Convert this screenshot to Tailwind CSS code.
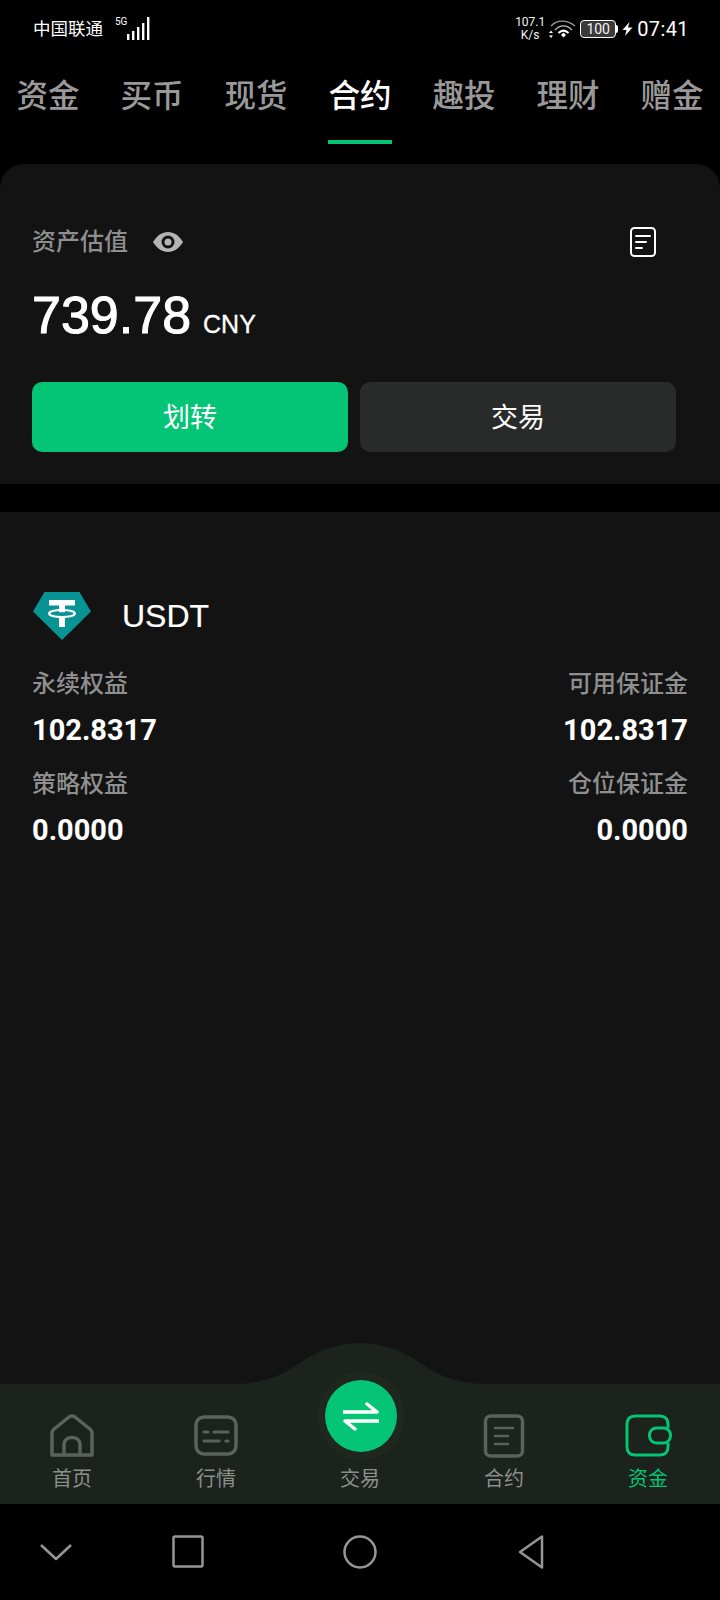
<!DOCTYPE html>
<html lang="zh-CN">

<head>
    <meta charset="UTF-8">
    <meta name="viewport" content="width=device-width, initial-scale=1.0">
    <title>资金 - 合约</title>
    <script src="https://cdn.jsdelivr.net/npm/@tailwindcss/browser@4"></script>
</head>

<body class="bg-black">
    <div class="w-[720px] h-[1600px] flex flex-col overflow-hidden bg-black text-white font-['Roboto','Noto_Sans_CJK_SC',sans-serif]">

        <!-- Status bar -->
        <div class="h-[58px] shrink-0 flex items-center pl-[33px] pr-[31px]">
            <span class="text-[17.5px] leading-none mt-[2px]">中国联通</span>
            <span class="text-[10px] leading-none ml-[12px] -mt-[15px]">5G</span>
            <svg width="24" height="24" viewBox="0 0 24 24" fill="#fff">
                <rect x="0" y="17" width="2.4" height="6"/>
                <rect x="5" y="14" width="2.4" height="9"/>
                <rect x="10" y="10" width="2.4" height="13"/>
                <rect x="15" y="6" width="2.4" height="17"/>
                <rect x="20" y="0" width="2.4" height="23"/>
            </svg>
            <div class="ml-auto flex items-center">
                <div class="flex flex-col items-center text-[12px] leading-[13px] text-gray-100 w-[30px]">
                    <span>107.1</span>
                    <span>K/s</span>
                </div>
                <svg class="ml-[3px]" width="28" height="24" viewBox="0 0 28 24" fill="none" stroke="#fff">
                    <path d="M3 9C9 2.500 19 2.500 27 9" stroke-width="1.200" opacity="0.6"/>
                    <path d="M7 13C12 7.500 19 7.500 24 13" stroke-width="1.200" opacity="0.75"/>
                    <path d="M10.500 16C14 12.800 17 12.800 20.500 16" stroke-width="2.200"/>
                    <path d="M13 18L15.500 15.500L18 18L15.500 20.500Z" fill="#fff" stroke="none"/>
                    <path d="M1 16L3 13.500L5 16ZM1 18.500L3 21L5 18.500Z" fill="#fff" stroke="none"/>
                </svg>
                <div class="ml-[4px] w-[36px] h-[18px] rounded-[4px] border border-white bg-[#3a3a3a] flex items-center justify-center text-[14px] leading-none text-gray-100">100</div>
                <div class="w-[2px] h-[8px] bg-white rounded-r-sm"></div>
                <svg class="ml-[4px]" width="11" height="14" viewBox="0 0 11 14" fill="#fff">
                    <path d="M7.500 0L0.500 8H4.500L3 14L10.500 5.500H6Z"/>
                </svg>
                <span class="ml-[4px] text-[20px] leading-none tracking-[0.4px]">07:41</span>
            </div>
        </div>

        <!-- Account tabs -->
        <div class="h-[106px] shrink-0 flex -ml-[4px] text-[31.5px] leading-none font-medium text-[#999999]">
            <div class="w-[104px] shrink-0 flex flex-col items-center pt-[23px]">资金</div>
            <div class="w-[104px] shrink-0 flex flex-col items-center pt-[23px]">买币</div>
            <div class="w-[104px] shrink-0 flex flex-col items-center pt-[23px]">现货</div>
            <div class="w-[104px] shrink-0 flex flex-col items-center pt-[23px] text-white">
                合约
                <div class="w-[64px] h-[4px] mt-[27.500px] bg-[#04c475]"></div>
            </div>
            <div class="w-[104px] shrink-0 flex flex-col items-center pt-[23px]">趣投</div>
            <div class="w-[104px] shrink-0 flex flex-col items-center pt-[23px]">理财</div>
            <div class="w-[104px] shrink-0 flex flex-col items-center pt-[23px]">赠金</div>
        </div>

        <!-- Asset summary -->
        <section class="h-[320px] shrink-0 bg-[#131313] rounded-t-[24px] pl-[32px] pr-[44px]">
            <div class="flex items-center h-[36px] mt-[60px]">
                <span class="text-[24px] leading-none font-medium text-[#8f8f8f]">资产估值</span>
                <svg class="ml-[25px]" width="30" height="20" viewBox="0 0 30 20">
                    <path d="M0 10C4 3.500 9 0 15 0C21 0 26 3.500 30 10C26 16.500 21 20 15 20C9 20 4 16.500 0 10Z" fill="#b5b5b5"/>
                    <circle cx="15" cy="10" r="6.500" fill="#131313"/>
                    <circle cx="15" cy="10" r="3.500" fill="#b5b5b5"/>
                </svg>
                <svg class="ml-auto mr-[20px]" width="26" height="32" viewBox="0 0 26 32" fill="none" stroke="#fff" stroke-linecap="round">
                    <rect x="1" y="2" width="24" height="28" rx="3.500" stroke-width="2"/>
                    <path d="M6 10H20M6 16H16M6 22H12" stroke-width="2"/>
                </svg>
            </div>
            <div class="flex items-baseline mt-[25px] font-['Liberation_Sans',sans-serif]">
                <span class="text-[52px] leading-[60px] [-webkit-text-stroke:1px_#fff]">739.78</span>
                <span class="text-[25px] ml-[12px] [-webkit-text-stroke:0.3px_#fff]">CNY</span>
            </div>
            <div class="flex gap-[12px] mt-[37px]">
                <button class="flex-1 h-[70px] pt-[3px] rounded-[10px] bg-[#04c475] text-[27px] leading-none">划转</button>
                <button class="flex-1 h-[70px] pt-[3px] rounded-[10px] bg-[#292b2b] text-[27px] leading-none">交易</button>
            </div>
        </section>

        <div class="h-[28px] shrink-0"></div>

        <!-- Contract balance -->
        <section class="flex-1 bg-[#131313] px-[32px] pt-[79px]">
            <div class="flex items-center h-[50px]">
                <svg width="60" height="50" viewBox="0 0 60 50">
                    <path d="M12.500 1H47.500L59 20.500L30 49L1 20.500Z" fill="#089494"/>
                    <path d="M17 9H43V14.500H33V18C38 18.300 44 19.500 44 22.500C44 25.500 38 26.700 33 27V36H27V27C22 26.700 16 25.500 16 22.500C16 19.500 22 18.300 27 18V14.500H17Z" fill="#fff"/>
                    <ellipse cx="30" cy="22.500" rx="11.500" ry="2.600" fill="#089494"/>
                    <rect x="27" y="18" width="6" height="3.200" fill="#fff"/>
                </svg>
                <span class="ml-[30px] text-[32px] leading-none font-['Liberation_Sans',sans-serif] [-webkit-text-stroke:0.2px_#fff]">USDT</span>
            </div>
            <div class="grid grid-cols-2 mt-[25px]">
                <div>
                    <div class="text-[24px] leading-[36px] font-medium text-[#8f8f8f]">永续权益</div>
                    <div class="text-[29px] leading-[36px] mt-[10px] font-bold">102.8317</div>
                </div>
                <div class="text-right">
                    <div class="text-[24px] leading-[36px] font-medium text-[#8f8f8f]">可用保证金</div>
                    <div class="text-[29px] leading-[36px] mt-[10px] font-bold">102.8317</div>
                </div>
                <div class="mt-[18px]">
                    <div class="text-[24px] leading-[36px] font-medium text-[#8f8f8f]">策略权益</div>
                    <div class="text-[29px] leading-[36px] mt-[10px] font-bold">0.0000</div>
                </div>
                <div class="mt-[18px] text-right">
                    <div class="text-[24px] leading-[36px] font-medium text-[#8f8f8f]">仓位保证金</div>
                    <div class="text-[29px] leading-[36px] mt-[10px] font-bold">0.0000</div>
                </div>
            </div>
        </section>

        <!-- Bottom tab bar -->
        <nav class="relative h-[120px] shrink-0 bg-[#1c221c] grid grid-cols-5 text-[20px] leading-none text-[#8d8f8c]">
            <svg class="absolute left-[215px] -top-[41px]" width="290" height="42" viewBox="0 0 290 42" fill="#1c221c">
                <path d="M0 42C45 42 65 34 85 20C105 6 125 0 145 0C165 0 185 6 205 20C225 34 245 42 290 42Z"/>
            </svg>

            <a class="flex flex-col items-center pt-[30px]">
                <svg width="44" height="44" viewBox="0 0 44 44" fill="none" stroke="#5a635b" stroke-width="3.500" stroke-linejoin="round">
                    <path d="M2 41V19Q2 17 3.500 15.500L19 3Q22 1 25 3L40.500 15.500Q42 17 42 19V41Z"/>
                    <path d="M14 41V31C14 21 30 21 30 31V41"/>
                </svg>
                <span class="mt-[11px]">首页</span>
            </a>
            <a class="flex flex-col items-center pt-[30px]">
                <svg width="44" height="44" viewBox="0 0 44 44" fill="none" stroke="#5a635b" stroke-linecap="round">
                    <rect x="2" y="3" width="40" height="37" rx="8" stroke-width="3.500"/>
                    <path d="M10 18H14M20 18H34M10 27H25M32 27H34" stroke-width="3.200"/>
                </svg>
                <span class="mt-[11px]">行情</span>
            </a>
            <a class="relative flex flex-col items-center pt-[85px]">
                <div class="absolute left-[29px] top-[-12px] w-[88px] h-[88px] rounded-full bg-[#20271f] flex items-center justify-center">
                    <div class="w-[72px] h-[72px] rounded-full bg-[#04c475] flex items-center justify-center">
                        <svg width="36" height="30" viewBox="0 0 36 30" fill="none" stroke="#fff" stroke-width="3.500" stroke-linecap="round" stroke-linejoin="round">
                            <path d="M1 11H34L24 3"/>
                            <path d="M35 20H2L12 28"/>
                        </svg>
                    </div>
                </div>
                <span>交易</span>
            </a>
            <a class="flex flex-col items-center pt-[30px]">
                <svg width="44" height="44" viewBox="0 0 44 44" fill="none" stroke="#5a635b" stroke-linecap="round">
                    <rect x="3.500" y="2" width="37" height="40" rx="5" stroke-width="3.500"/>
                    <path d="M13 14H31M13 22H26M13 30H26" stroke-width="2.500"/>
                </svg>
                <span class="mt-[11px]">合约</span>
            </a>
            <a class="flex flex-col items-center pt-[30px] text-[#04c475]">
                <svg width="48" height="44" viewBox="0 0 48 44" fill="none" stroke="#04c475" stroke-width="3">
                    <path d="M44 14V10C44 5 41 2 36 2H11C6 2 3 5 3 10V33C3 38 6 41 11 41H36C41 41 44 38 44 33V29"/>
                    <rect x="25.500" y="14" width="21" height="15" rx="7" fill="#1c221c"/>
                </svg>
                <span class="mt-[11px]">资金</span>
            </a>
        </nav>

        <!-- System navigation -->
        <div class="relative h-[96px] shrink-0">
            <svg class="absolute inset-0" width="720" height="96" viewBox="0 0 720 96" fill="none" stroke="#969696" stroke-width="2.500" stroke-linejoin="round">
                <path d="M41 41L56 55L71 41"/>
                <rect x="173.500" y="32.500" width="29" height="30" rx="1.500"/>
                <circle cx="360" cy="48" r="15.500"/>
                <path d="M542 32.500V63.500L520 48Z"/>
            </svg>
        </div>
    </div>
</body>

</html>
